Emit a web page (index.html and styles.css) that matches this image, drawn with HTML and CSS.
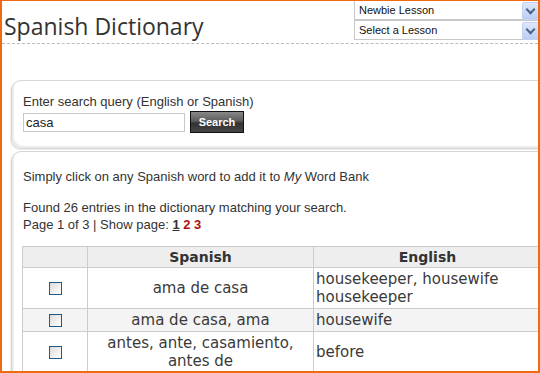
FILE: index.html
```html
<!DOCTYPE html>
<html lang="en">
<head>
    <meta charset="UTF-8">
    <title>Spanish Dictionary</title>
    <link rel="stylesheet" href="styles.css">
</head>
<body>
    <div class="frame">
        <div class="page">
            <!-- Cabecera -->
            <div class="topbar">
                <h1>Spanish Dictionary</h1>
                <div class="lessons">
                    <div class="fake-select">Newbie Lesson<span class="arrow"></span></div>
                    <div class="fake-select">Select a Lesson<span class="arrow"></span></div>
                </div>
            </div>

            <!-- Busqueda -->
            <div class="panel search-panel">
                <label for="query">Enter search query (English or Spanish)</label>
                <div class="search-row">
                    <input type="text" id="query" value="casa">
                    <button type="button">Search</button>
                </div>
            </div>

            <!-- Resultados -->
            <div class="panel results">
                <p class="hint">Simply click on any Spanish word to add it to <em>My</em> Word Bank</p>
                <p class="found">Found 26 entries in the dictionary matching your search.<br>
                    Page 1 of 3 | Show page: <span class="current">1</span> <a href="#">2</a> <a href="#">3</a></p>

                <table class="entries">
                    <colgroup>
                        <col class="c-check">
                        <col class="c-es">
                        <col class="c-en">
                    </colgroup>
                    <thead>
                        <tr>
                            <th></th>
                            <th>Spanish</th>
                            <th>English</th>
                        </tr>
                    </thead>
                    <tbody>
                        <tr>
                            <td class="check"><span class="box"></span></td>
                            <td class="es">ama de casa</td>
                            <td class="en">housekeeper, housewife<br>housekeeper</td>
                        </tr>
                        <tr class="alt">
                            <td class="check"><span class="box"></span></td>
                            <td class="es">ama de casa, ama</td>
                            <td class="en">housewife</td>
                        </tr>
                        <tr>
                            <td class="check"><span class="box"></span></td>
                            <td class="es">antes, ante, casamiento,<br>antes de</td>
                            <td class="en">before</td>
                        </tr>
                    </tbody>
                </table>
            </div>
        </div>
    </div>
</body>
</html>
```

FILE: styles.css
```css
body {
    margin: 0;
    background-color: white;
    font-family: "Liberation Sans", Arial, sans-serif;
    color: #333;
}

.frame {
    width: 536px;
    height: 370px;
    border-left: 2px solid #f06a12;
    border-top: 1px solid #f06a12;
    border-right: 2px solid #f06a12;
    border-bottom: 2px solid #f06a12;
    overflow: hidden;
}

.page {
    width: 620px;
}

.topbar {
    display: flex;
    justify-content: space-between;
    height: 42px;
    border-bottom: 1px dashed #bbb;
    width: 536px;
}

h1 {
    margin: 0;
    padding: 9px 0 0 2px;
    font-family: "Open Sans", sans-serif;
    font-weight: normal;
    font-size: 23px;
    color: #333;
}

.lessons {
    width: 184px;
    margin-left: auto;
}

.fake-select {
    position: relative;
    height: 18px;
    border: 1px solid #c8c8c8;
    border-right: none;
    border-top: none;
    font-size: 11px;
    line-height: 18px;
    padding-left: 4px;
    color: #111;
}

.fake-select + .fake-select {
    border-top: 1px solid #c8c8c8;
}

.arrow {
    position: absolute;
    right: -2px;
    top: 1px;
    width: 16px;
    height: 16px;
    border-radius: 2px;
    background: linear-gradient(#dfe8fb, #b9cdf6);
    border: 1px solid #c4d3f5;
}

.arrow::after {
    content: "";
    position: absolute;
    left: 4px;
    top: 3px;
    width: 5px;
    height: 5px;
    border-right: 2px solid #4d6185;
    border-bottom: 2px solid #4d6185;
    transform: rotate(45deg);
}

.panel {
    margin-left: 9px;
    border: 1px solid #d6d6d6;
    border-radius: 10px;
    box-shadow: inset 2px -2px 0 #ececec, -1px 1px 0 #eee;
    background-color: white;
}

.search-panel {
    margin-top: 36px;
    height: 54px;
    padding: 13px 12px 0 11px;
}

label {
    display: block;
    font-size: 13px;
    margin-bottom: 2px;
}

.search-row {
    display: flex;
    align-items: flex-end;
    gap: 5px;
}

input {
    width: 156px;
    height: 15px;
    padding: 1px 2px;
    border: 1px solid #c8c8c8;
    font-family: "Liberation Sans", Arial, sans-serif;
    font-size: 13px;
    color: #222;
    margin: 0;
}

button {
    width: 54px;
    height: 22px;
    border: 1px solid #111;
    background: linear-gradient(#888 0%, #5c5c5c 45%, #333 55%, #444 100%);
    color: white;
    font-family: "Liberation Sans", Arial, sans-serif;
    font-size: 11px;
    font-weight: bold;
    padding: 0;
    margin-bottom: -1px;
}

.results {
    margin-top: 2px;
    height: 300px;
    padding: 17px 0 0 11px;
}

p {
    margin: 0;
    font-size: 13px;
}

.hint {
    margin-bottom: 15px;
}

.found {
    line-height: 17px;
}

.current {
    font-weight: bold;
    text-decoration: underline;
    color: #333;
}

.found a {
    font-weight: bold;
    color: #b01010;
    text-decoration: none;
}

.entries {
    margin: 13px 0 0 -1px;
    width: 519px;
    table-layout: fixed;
    border-collapse: collapse;
    font-family: "DejaVu Sans", Verdana, sans-serif;
    font-size: 15px;
    color: #3a3a3a;
}

.c-check { width: 65px; }
.c-es { width: 226px; }
.c-en { width: 228px; }

.entries th, .entries td {
    border: 1px solid #ccc;
    padding: 0 2px;
    line-height: 18px;
}

.entries th {
    background-color: #eee;
    height: 20px;
    font-size: 14px;
    color: #333;
}

.entries td.check, .entries td.es {
    text-align: center;
}

.entries tr td {
    height: 40px;
}

.entries tr.alt td {
    height: 22px;
    background-color: #f4f4f4;
}

.box {
    display: inline-block;
    width: 11px;
    height: 11px;
    border: 1px solid #1c5a8c;
    background: linear-gradient(135deg, #dcdcd6, #fff);
    vertical-align: middle;
}
```
